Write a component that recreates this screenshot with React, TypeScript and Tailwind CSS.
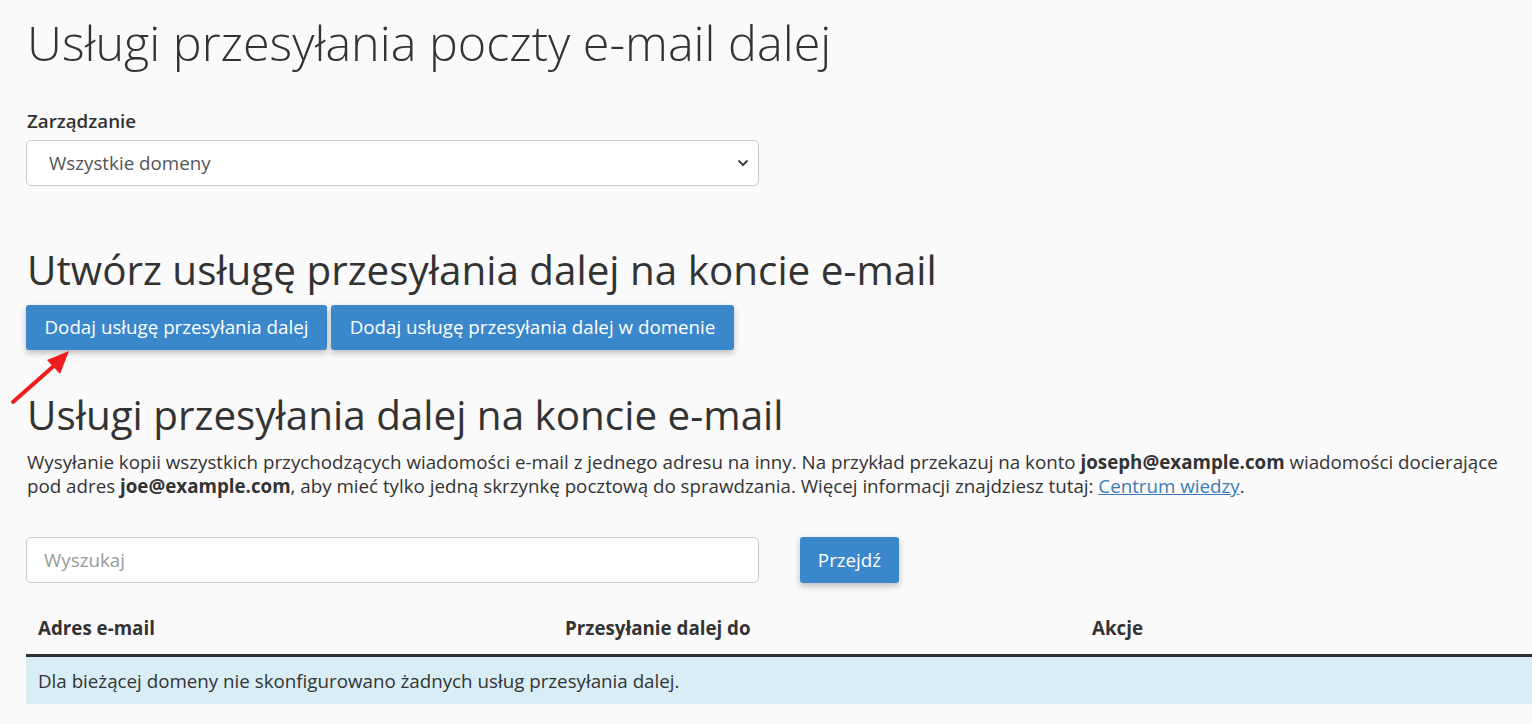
import React from "react";

export default function App() {
  return (
    <div className="min-h-screen w-full overflow-hidden bg-[#fafafa] text-[#333] font-['Open_Sans',sans-serif]">
      <div className="relative w-[1607px] pl-[26px] pr-[26px]">
        <h1 className="pt-[12px] text-[48.5px] font-light leading-[60px] text-[#333] pl-[1px]">
          Usługi przesyłania poczty e-mail dalej
        </h1>

        <div className="mt-[37px]">
          <label className="block text-[18.75px] font-semibold leading-[24px] pl-[1px]">Zarządzanie</label>
          <div className="relative mt-[7px] w-[733px]">
            <div className="flex h-[46px] items-center rounded-[5px] border border-[#ccc] bg-white pl-[22px] text-[18.75px] text-[#555]">
              Wszystkie domeny
            </div>
            <svg className="absolute right-[10px] top-[18px]" width="12" height="10" viewBox="0 0 12 10">
              <path d="M1.5 2.5 L6 7 L10.5 2.5" fill="none" stroke="#444" strokeWidth="2" />
            </svg>
          </div>
        </div>

        <h2 className="mt-[59px] text-[40.4px] font-normal leading-[50px] pl-[1px]">
          Utwórz usługę przesyłania dalej na koncie e-mail
        </h2>
        <div className="mt-[10px] flex gap-[4px]">
          <button className="h-[45px] w-[301px] rounded-[3px] bg-[#3b87cc] text-[18.75px] text-white shadow-[0_3px_6px_rgba(0,0,0,0.25)]">
            Dodaj usługę przesyłania dalej
          </button>
          <button className="h-[45px] w-[403px] rounded-[3px] bg-[#3b87cc] text-[18.75px] text-white shadow-[0_3px_6px_rgba(0,0,0,0.25)]">
            Dodaj usługę przesyłania dalej w domenie
          </button>
        </div>

        <svg className="absolute left-[8px] top-[346px]" width="66" height="62" viewBox="0 0 66 62">
          <line x1="5" y1="56" x2="48" y2="18" stroke="#ee1c1c" strokeWidth="4" strokeLinecap="round" />
          <polygon points="61,5 39,14 52,28" fill="#ee1c1c" />
        </svg>

        <h2 className="mt-[40px] text-[40.4px] font-normal leading-[50px] pl-[1px]">
          Usługi przesyłania dalej na koncie e-mail
        </h2>
        <p className="mt-[10px] w-[1490px] text-[18.75px] leading-[24px] pl-[1px]">
          Wysyłanie kopii wszystkich przychodzących wiadomości e-mail z jednego adresu na inny. Na przykład przekazuj na konto{" "}
          <b className="font-bold">joseph@example.com</b> wiadomości docierające pod adres{" "}
          <b className="font-bold">joe@example.com</b>, aby mieć tylko jedną skrzynkę pocztową do sprawdzania. Więcej
          informacji znajdziesz tutaj: <a className="text-[#3a7ab8] underline">Centrum wiedzy</a>.
        </p>

        <div className="mt-[39px] flex items-center gap-[41px]">
          <div className="flex h-[46px] w-[733px] items-center rounded-[5px] border border-[#ccc] bg-white pl-[17px] text-[18.75px] text-[#999]">
            Wyszukaj
          </div>
          <button className="h-[46px] w-[99px] rounded-[3px] bg-[#3b87cc] text-[18.75px] text-white shadow-[0_3px_6px_rgba(0,0,0,0.25)]">
            Przejdź
          </button>
        </div>

        <div className="mt-[20px] w-[1581px]">
          <div className="grid grid-cols-3 border-b-[3px] border-[#2e3135] text-[18.75px] font-bold leading-[24px]">
            <div className="px-[12px] pt-[13px] pb-[14px]">Adres e-mail</div>
            <div className="px-[12px] pt-[13px] pb-[14px]">Przesyłanie dalej do</div>
            <div className="px-[12px] pt-[13px] pb-[14px]">Akcje</div>
          </div>
          <div className="bg-[#d9edf7] px-[12px] py-[11px] text-[18.75px] leading-[25px]">
            Dla bieżącej domeny nie skonfigurowano żadnych usług przesyłania dalej.
          </div>
        </div>
      </div>
    </div>
  );
}
